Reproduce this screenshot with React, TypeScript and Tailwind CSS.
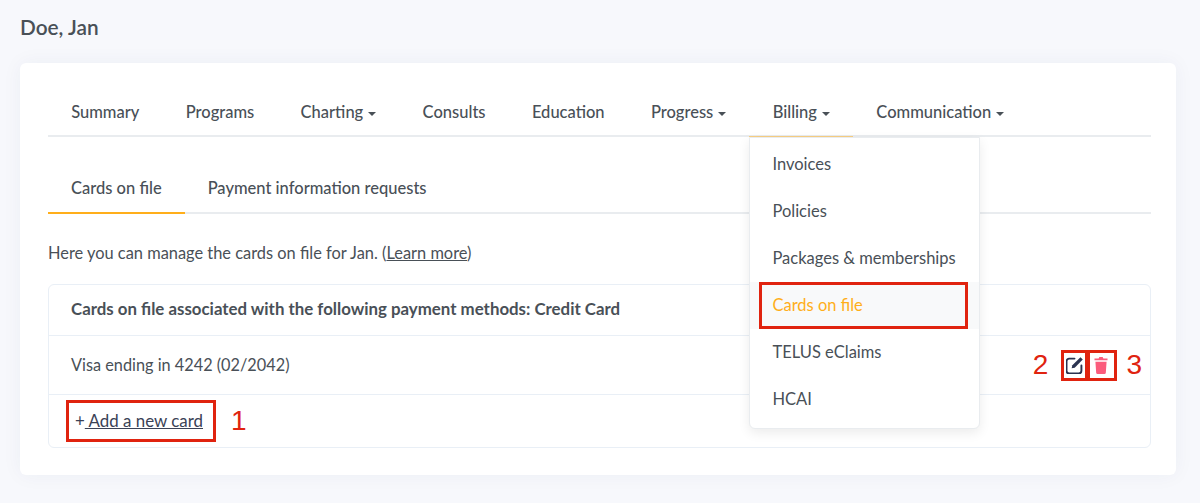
const navItems = [
  { label: "Summary", caret: false },
  { label: "Programs", caret: false },
  { label: "Charting", caret: true },
  { label: "Consults", caret: false },
  { label: "Education", caret: false },
  { label: "Progress", caret: true },
  { label: "Billing", caret: true, open: true },
  { label: "Communication", caret: true },
];

const menuItems = ["Invoices", "Policies", "Packages & memberships", "Cards on file", "TELUS eClaims", "HCAI"];

function Caret() {
  return <span className="ml-[5px] inline-block w-0 h-0 border-x-[4px] border-x-transparent border-t-[4px] border-t-[#495057] align-middle" />;
}

function Marker({ children }: { children: string }) {
  return <span className="text-[28px] leading-[34px] text-[#e0230f] font-['Liberation_Sans',sans-serif]">{children}</span>;
}

function BillingMenu() {
  return (
    <div className="absolute left-0 top-[48px] z-10 h-[292px] w-[231px] rounded-b-md border border-[#e9ecef] bg-white py-[3px] shadow-[0_4px_12px_rgba(0,0,0,0.08)]">
      {menuItems.map((m) =>
        m === "Cards on file" ? (
          <div key={m} className="h-[47px] bg-[#f8f9fa] pl-[9px]">
            <div className="h-[47px] w-[209px] border-[3px] border-[#e0230f] pl-[10px] leading-[41px] font-normal text-[#ffae1a]">{m}</div>
          </div>
        ) : (
          <div key={m} className="h-[47px] px-[22px] leading-[47px] font-normal">
            {m}
          </div>
        )
      )}
    </div>
  );
}

export default function App() {
  return (
    <div className="h-[503px] w-[1200px] overflow-hidden bg-[#f7f8fc] px-5 text-[#495057] font-['Lato','Noto_Sans',sans-serif] text-[16.5px]">
      <h1 className="h-[63px] pt-[13px] text-[20.8px] leading-[28px] font-semibold">Doe, Jan</h1>

      <div className="h-[412px] w-[1156px] rounded-md bg-white pl-7 pr-[25px] pt-[26px] shadow-[0_0_20px_rgba(40,50,90,0.05)]">
        <div className="flex h-[48px] border-b-2 border-[#e9ecef]">
          {navItems.map((item) => (
            <div key={item.label} className={`relative h-[48px] px-[23.2px] leading-[47px] font-medium whitespace-nowrap ${item.open ? "border-b border-[#f8cf83]" : ""}`}>
              {item.label}
              {item.caret && <Caret />}
              {item.open && <BillingMenu />}
            </div>
          ))}
        </div>

        <div className="mt-[28px] flex h-[49px] border-b-2 border-[#e9ecef]">
          <div className="-mb-[2px] h-[49px] border-b-2 border-[#ffae1a] px-[23px] leading-[46px] font-medium">Cards on file</div>
          <div className="px-[23px] leading-[46px] font-medium">Payment information requests</div>
        </div>

        <p className="mt-[27px] text-[16.4px] leading-[24px]">
          Here you can manage the cards on file for Jan. (<span className="underline">Learn more</span>)
        </p>

        <div className="mt-[19px] h-[164px] rounded-md border border-[#e9eff6]">
          <div className="flex h-[51px] items-center border-b border-[#e9eff6] pb-[2px] pl-[22px] text-[16.85px] font-bold">
            Cards on file associated with the following payment methods: Credit Card
          </div>
          <div className="flex h-[59px] items-center justify-between border-b border-[#e9eff6] pl-[22px] pr-[8px] text-[16.3px]">
            <span>Visa ending in 4242 (02/2042)</span>
            <div className="flex items-center">
              <Marker>2</Marker>
              <div className="ml-[13px] flex h-[31px] w-[27px] items-center justify-center border-[3px] border-[#e0230f]">
                <svg width="17" height="17" viewBox="2 2 16 16" fill="none">
                  <path d="M10 3.5H5A2.5 2.5 0 0 0 2.5 6v9A2.5 2.5 0 0 0 5 17.5h9a2.5 2.5 0 0 0 2.5-2.5v-5" stroke="#2b3350" strokeWidth="1.8" strokeLinecap="round" />
                  <path d="M15.6 2.2l2.2 2.2-7.6 7.6-2.9.7.7-2.9z" fill="#2b3350" />
                </svg>
              </div>
              <div className="-ml-px mr-[9px] flex h-[31px] w-[30px] items-center justify-center border-[3px] border-[#e0230f] pr-[3px]">
                <svg width="14" height="17" viewBox="2 1 14 18.3" fill="#fb5c7c">
                  <path d="M6.5 2.5 7.2 1h3.6l.7 1.5H16v2H2v-2z" />
                  <path d="M3 6h12l-.8 12a1.5 1.5 0 0 1-1.5 1.3H5.3A1.5 1.5 0 0 1 3.8 18z" />
                </svg>
              </div>
              <Marker>3</Marker>
            </div>
          </div>
          <div className="flex h-[52px] items-center gap-[15px] pl-[17px]">
            <div className="flex h-[42px] w-[150px] items-center border-[3px] border-[#e0230f] pl-[6px] text-[16.9px] text-[#3a4256] whitespace-pre">
              <span>+</span>
              <span className="underline"> Add a new card</span>
            </div>
            <Marker>1</Marker>
          </div>
        </div>
      </div>
    </div>
  );
}
